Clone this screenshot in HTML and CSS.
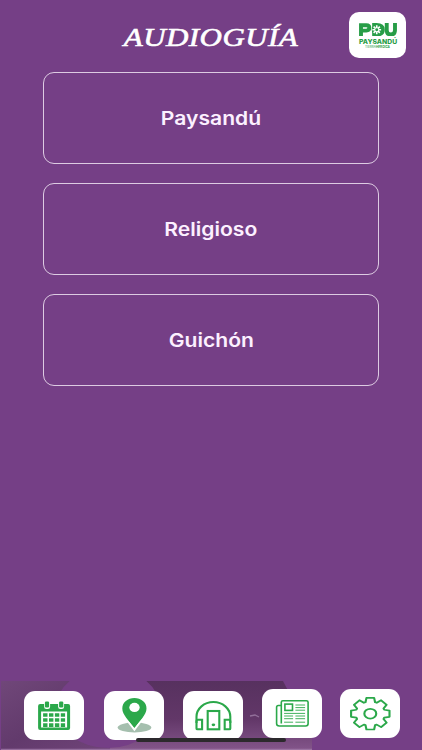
FILE: index.html
```html
<!DOCTYPE html>
<html lang="es">
<head>
<meta charset="utf-8">
<title>Audioguía</title>
<link rel="stylesheet" href="styles.css">
</head>
<body>
<div class="app">
  <header class="header">
    <h1 class="title">AUDIOGUÍA</h1>
    <div class="brand">
      <svg class="brand-mark" viewBox="0 0 39 14">
        <g fill="none" stroke="#279d47" stroke-width="4">
          <path d="M2 14V2.3H7.5Q10.6 2.3 10.6 5T7.5 7.8H2"/>
          <path d="M15.5 2.1H18Q24.5 2.1 24.5 7T18 11.9H15.5Z"/>
          <path d="M28.5 0V7.4Q28.5 11.9 32.7 11.9T37 7.4V0"/>
        </g>
        <circle cx="18.2" cy="7" r="5.2" fill="#279d47"/>
        <path d="M18.2 2.3V11.7M13.7 7H22.7M15 3.8L21.4 10.2M21.4 3.8L15 10.2" stroke="#fff" stroke-width="1.7"/>
        <circle cx="18.2" cy="7" r="1.5" fill="#279d47"/>
      </svg>
      <span class="brand-name">PAYSANDÚ</span>
      <span class="brand-tag">TIERRA<b>HEROICA</b></span>
    </div>
  </header>
  <main class="list">
    <a class="card"><span>Paysandú</span></a>
    <a class="card"><span>Religioso</span></a>
    <a class="card"><span>Guichón</span></a>
  </main>
  <footer class="footer">
    <svg class="scene" viewBox="0 0 422 69">
      <defs>
        <linearGradient id="left" x1="0" y1="0" x2="1" y2="1"><stop stop-color="#704779"/><stop offset=".5" stop-color="#623a6c"/><stop offset="1" stop-color="#704479"/></linearGradient>
        <linearGradient id="right" x1="0" y1="0" x2="0" y2="1"><stop stop-color="#57315f"/><stop offset=".55" stop-color="#623768"/><stop offset="1" stop-color="#83558a"/></linearGradient>
      </defs>
      <path d="M1 0H110V69H1Z" fill="url(#left)"/>
      <path d="M110 0H283L312 55V69H110Z" fill="url(#right)"/>
      <ellipse cx="108" cy="27" rx="52" ry="40" fill="#753f86"/>
      <path d="M250 35l5-1 4 2" fill="none" stroke="#92709a" stroke-width="1.3"/>
      <path d="M1 68.3H312" stroke="#a27ba9" stroke-width="1"/>
    </svg>
    <nav class="nav">
      <a class="tab tab-events"><svg viewBox="0 0 60 49">
        <path d="M14 15q0-2 2-2h28q2 0 2 2v22q0 2-2 2H16q-2 0-2-2Z" fill="#2ba84a"/>
        <path d="M17 20.5H43V36.5H17Z" fill="#fff"/>
        <rect x="20" y="9" width="6" height="9" rx="2.2" fill="#fff"/><rect x="34" y="9" width="6" height="9" rx="2.2" fill="#fff"/>
        <rect x="20.8" y="10.5" width="4.2" height="6" rx="1.3" fill="#2ba84a"/><rect x="35" y="10.5" width="4.2" height="6" rx="1.3" fill="#2ba84a"/>
        <path d="M19 24H41M19 29H41M19 34.2H41" stroke="#2ba84a" stroke-width="3.7" stroke-dasharray="4.4 1.5"/>
      </svg></a>
      <a class="tab tab-map"><svg viewBox="0 0 60 49">
        <ellipse cx="30.4" cy="36.5" rx="16.8" ry="5.1" fill="#a5bfae"/>
        <path d="M30.3 38.6C25 31 18.2 25 18.2 17.4a12.1 10.4 0 0 1 24.2 0C42.4 25 35.5 31 30.3 38.6Z" fill="#2ba84a" stroke="#fff" stroke-width="2"/>
        <path d="M30.3 36.5C25 29.5 18.2 24 18.2 17.4a12.1 10.4 0 0 1 24.2 0C42.4 24 35.5 29.5 30.3 36.5Z" fill="#2ba84a"/>
        <ellipse cx="30.4" cy="16.4" rx="5.2" ry="4.6" fill="#fff"/>
      </svg></a>
      <a class="tab tab-audio"><svg viewBox="0 0 60 49">
        <g fill="none" stroke="#2ba84a" stroke-width="2.1">
          <path d="M13.4 32V25.8A16.9 14.8 0 0 1 47.2 25.8V32"/>
          <path d="M13.4 37.4V30Q13.4 28.8 14.8 28.8H19V38.3H14.4Q13.4 38.3 13.4 37.4Z"/>
          <path d="M47.2 37.4V30Q47.2 28.8 45.8 28.8H41.6V38.3H46.2Q47.2 38.3 47.2 37.4Z"/>
          <rect x="24.6" y="20" width="11.6" height="18.3"/>
        </g>
        <ellipse cx="30.3" cy="33.8" rx="1.8" ry="1.4" fill="#2ba84a"/>
      </svg></a>
      <a class="tab tab-news"><svg viewBox="0 0 60 49">
        <g fill="none" stroke="#2ba84a" stroke-width="1.6">
          <path d="M19.2 34.5V13.2Q19.2 11.7 20.8 11.7H44.3Q46 11.7 46 13.2V34.8Q46 37 43.5 37H17.2Q14.5 37 14.5 34.6V18.2Q14.5 16.5 16.2 16.5H19"/>
          <rect x="22.8" y="15.1" width="7.6" height="6.3"/>
          <path d="M33.3 16H43M33.3 18.6H43M33.3 21.2H43M22 24.4H43M22 27H31M33.3 27H43M22 29.7H31M33.3 29.7H43M22 33.2H31M33.3 33.2H43" stroke-width=".9"/>
        </g>
      </svg></a>
      <a class="tab tab-settings"><svg viewBox="0 0 60 49">
        <g transform="translate(30.2 24.7) scale(.96 .79)" fill="none" stroke="#2ba84a" stroke-width="2.2" stroke-linejoin="round">
          <path d="M20-4V4L14.5 5L13.8 6.7L17 11.3L11.3 17L6.7 13.8L5 14.5L4 20H-4L-5 14.5L-6.7 13.8L-11.3 17L-17 11.3L-13.8 6.7L-14.5 5L-20 4V-4L-14.5-5L-13.8-6.7L-17-11.3L-11.3-17L-6.7-13.8L-5-14.5L-4-20H4L5-14.5L6.7-13.8L11.3-17L17-11.3L13.8-6.7L14.5-5Z"/>
          <circle r="6.2"/>
        </g>
      </svg></a>
    </nav>
    <div class="home-indicator"></div>
  </footer>
</div>
</body>
</html>
```
FILE: styles.css
```css
* { box-sizing: border-box; }
body { margin: 0; background: #753f86; }
.app {
  display: flex;
  flex-direction: column;
  width: 422px;
  height: 750px;
  overflow: hidden;
  background: #753f86;
  font-family: Inter, "Liberation Sans", sans-serif;
}
.header {
  display: grid;
  grid-template-columns: 1fr 220px 1fr;
  align-items: start;
  height: 72px;
  padding-top: 12px;
}
.title {
  grid-column: 2;
  margin: 11px 0 0;
  font: italic 400 26px/30px "Liberation Serif", serif;
  color: #fff;
  text-align: center;
  letter-spacing: .4px;
  -webkit-text-stroke: .6px #fff;
  transform: scaleX(1.19);
}
.brand {
  display: flex;
  flex-direction: column;
  align-items: center;
  justify-self: end;
  width: 57px;
  height: 46px;
  margin-right: 16px;
  padding-top: 10.5px;
  border-radius: 10px;
  background: #fff;
  color: #279d47;
}
.brand-mark { width: 38px; height: 13.6px; }
.brand-name { margin-top: 3px; font-size: 6.4px; line-height: 7px; font-weight: 800; transform: scaleX(1.06); }
.brand-tag { font-size: 3.1px; line-height: 3px; white-space: nowrap; }
.list {
  display: flex;
  flex: 1;
  flex-direction: column;
  gap: 19px;
  padding: 0 43px;
}
.card {
  display: flex;
  align-items: center;
  justify-content: center;
  height: 92px;
  border: 1px solid #ddcbe2;
  border-radius: 11px;
  color: #fcf0ff;
  font-size: 18.5px;
  font-weight: 600;
}
.card span { transform: translateY(.4px) scaleX(1.14); }
.footer { position: relative; height: 69px; }
.scene { position: absolute; inset: 0; width: 422px; height: 69px; }
.nav {
  position: relative;
  display: grid;
  grid-template-columns: 79.6px 79.4px 79px 78px 60.5px;
  padding: 8px 0 0 24.3px;
}
.tab {
  width: 60.2px;
  height: 49px;
  border-radius: 11px;
  background: #fff;
}
.tab svg { display: block; width: 100%; height: 100%; }
.tab-events, .tab-map { margin-top: 2px; }
.tab-audio { margin-top: 1.5px; }
.home-indicator {
  position: absolute;
  left: 136px;
  top: 56.5px;
  width: 150px;
  height: 4.5px;
  border-radius: 3px;
  background: #2c292d;
}
```
